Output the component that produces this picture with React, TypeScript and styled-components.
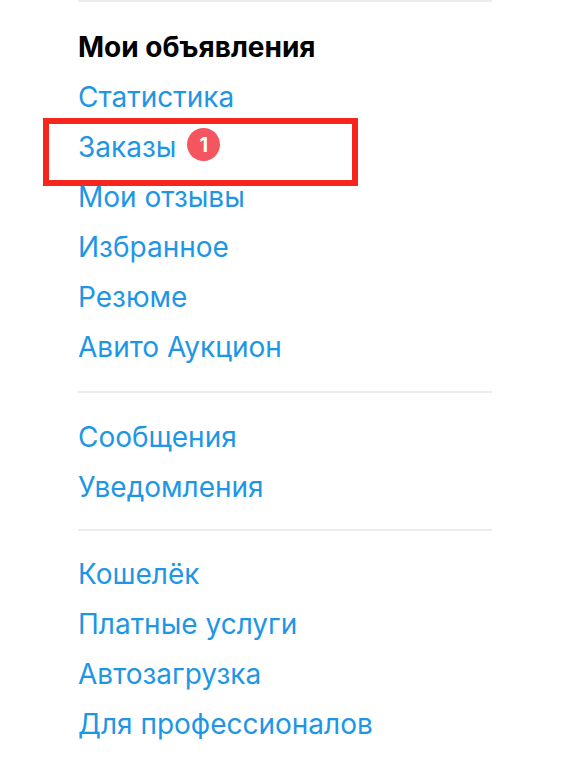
import * as React from 'react';
import styled, { createGlobalStyle } from 'styled-components';

const GlobalStyle = createGlobalStyle`
  html, body {
    margin: 0;
    padding: 0;
    background: #ffffff;
  }
  body {
    font-family: Inter, 'Liberation Sans', Arial, sans-serif;
  }
`;

const Page = styled.div`
  padding-left: 78px;
  width: 414px;
`;

const Divider = styled.hr`
  margin: 0;
  border: none;
  height: 2px;
  background: #ececec;
`;

const Section = styled.nav<{ $top: number; $bottom: number }>`
  display: flex;
  flex-direction: column;
  padding-top: ${({ $top }) => $top}px;
  padding-bottom: ${({ $bottom }) => $bottom}px;
`;

const Title = styled.div`
  font-size: 28px;
  font-weight: 700;
  line-height: 50px;
  color: #000000;
`;

const Row = styled.div`
  position: relative;
  display: flex;
  align-items: center;
  height: 50px;
`;

const Link = styled.a`
  font-size: 28px;
  line-height: 50px;
  color: #1e96e6;
  text-decoration: none;
`;

const Badge = styled.span`
  display: inline-flex;
  align-items: center;
  justify-content: center;
  width: 33px;
  height: 33px;
  margin-left: 11px;
  margin-top: -5px;
  border-radius: 50%;
  background: #f5555e;
  color: #ffffff;
  font-size: 20px;
  font-weight: 700;
`;

const Highlight = styled.div`
  position: absolute;
  left: -35px;
  top: -4px;
  width: 315px;
  height: 68px;
  box-sizing: border-box;
  border: 6px solid #f5261e;
  pointer-events: none;
`;

type Item = { label: string; badge?: number; marked?: boolean };

const groups: { items: Item[]; top: number; bottom: number; title?: string }[] = [
  {
    title: 'Мои объявления',
    top: 20,
    bottom: 19,
    items: [
      { label: 'Статистика' },
      { label: 'Заказы', badge: 1, marked: true },
      { label: 'Мои отзывы' },
      { label: 'Избранное' },
      { label: 'Резюме' },
      { label: 'Авито Аукцион' },
    ],
  },
  {
    top: 19,
    bottom: 17,
    items: [{ label: 'Сообщения' }, { label: 'Уведомления' }],
  },
  {
    top: 18,
    bottom: 0,
    items: [
      { label: 'Кошелёк' },
      { label: 'Платные услуги' },
      { label: 'Автозагрузка' },
      { label: 'Для профессионалов' },
    ],
  },
];

export default function App() {
  return (
    <Page>
      <GlobalStyle />
      <Divider />
      {groups.map((group, i) => (
        <React.Fragment key={i}>
          {i > 0 && <Divider />}
          <Section $top={group.top} $bottom={group.bottom}>
            {group.title && <Title>{group.title}</Title>}
            {group.items.map((item) => (
              <Row key={item.label}>
                <Link href="#">{item.label}</Link>
                {item.badge !== undefined && <Badge>{item.badge}</Badge>}
                {item.marked && <Highlight />}
              </Row>
            ))}
          </Section>
        </React.Fragment>
      ))}
    </Page>
  );
}
